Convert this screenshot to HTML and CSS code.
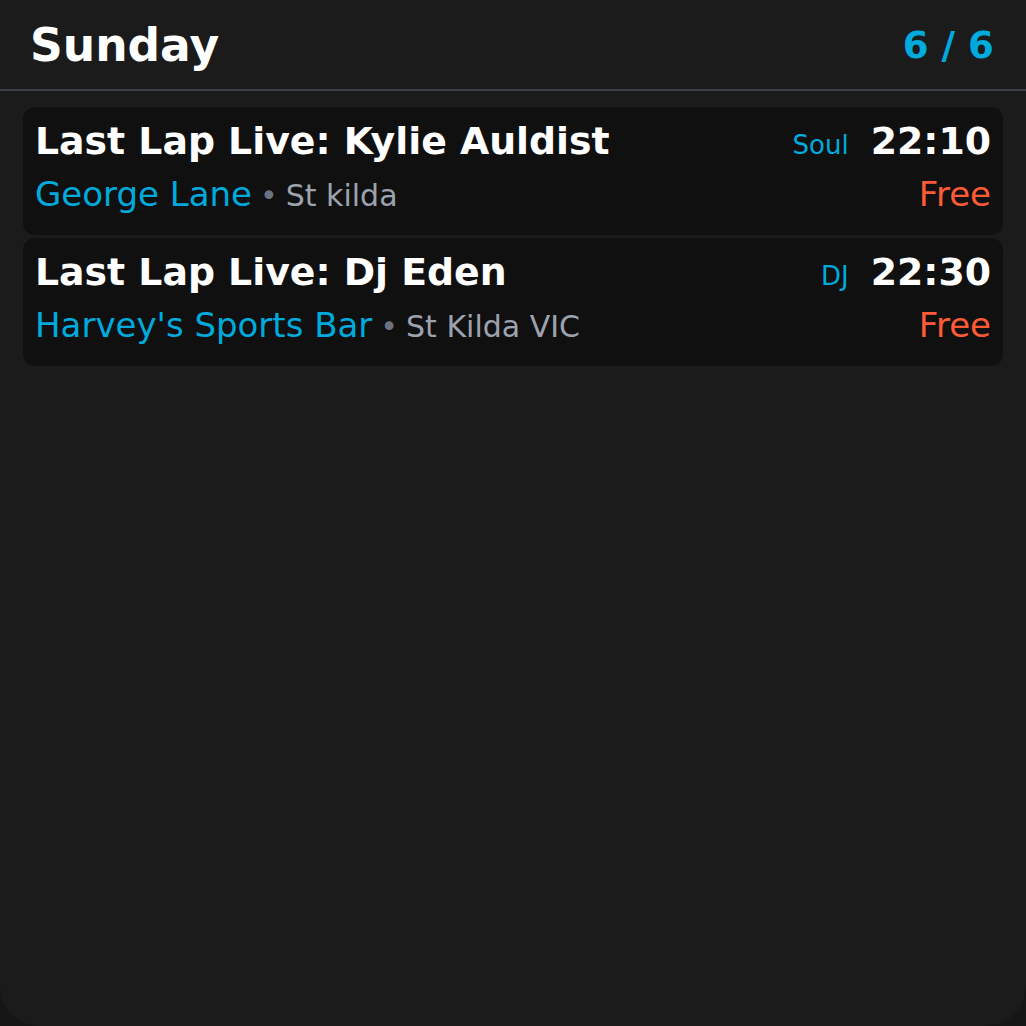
FILE: index.html
```html
<!DOCTYPE html>
<html>
<head>
<meta charset="utf-8">
<link rel="stylesheet" href="styles.css">
</head>
<body>
<div class="panel">
  <header class="head">
    <h1 class="day">Sunday</h1>
    <div class="count">6 / 6</div>
  </header>
  <div class="list">
    <div class="card">
      <div class="row">
        <div class="title">Last Lap Live: Kylie Auldist</div>
        <div class="right">
          <span class="tag">Soul</span>
          <span class="time">22:10</span>
        </div>
      </div>
      <div class="row row2">
        <div class="place"><span class="venue">George Lane</span><span class="dot">•</span><span class="loc">St kilda</span></div>
        <div class="price">Free</div>
      </div>
    </div>
    <div class="card">
      <div class="row">
        <div class="title">Last Lap Live: Dj Eden</div>
        <div class="right">
          <span class="tag">DJ</span>
          <span class="time">22:30</span>
        </div>
      </div>
      <div class="row row2">
        <div class="place"><span class="venue">Harvey's Sports Bar</span><span class="dot">•</span><span class="loc">St Kilda VIC</span></div>
        <div class="price">Free</div>
      </div>
    </div>
  </div>
</div>
</body>
</html>
```

FILE: styles.css
```css
html, body {
  margin: 0;
  padding: 0;
  background: #161616;
}
body {
  font-family: "DejaVu Sans", sans-serif;
  color: #fff;
}
.panel {
  width: 1026px;
  height: 1026px;
  background: #1b1b1b;
  border-radius: 0 0 40px 40px;
  box-sizing: border-box;
}
.head {
  height: 89px;
  border-bottom: 2px solid #3a3f49;
  display: flex;
  align-items: center;
  justify-content: space-between;
  padding: 0 32px 0 30px;
}
.day {
  margin: 0;
  font-size: 45.5px;
  font-weight: bold;
  line-height: normal;
  padding-top: 2px;
}
.count {
  font-size: 37.2px;
  font-weight: bold;
  color: #00aadd;
}
.list {
  padding: 16px 23px 0;
  display: flex;
  flex-direction: column;
  gap: 3px;
}
.card {
  background: #101010;
  border-radius: 12px;
  padding: 12px 12px 21px;
  display: flex;
  flex-direction: column;
  gap: 11px;
}
.row {
  display: flex;
  justify-content: space-between;
  align-items: baseline;
}
.title {
  font-size: 37.8px;
  font-weight: bold;
  line-height: 44px;
}
.right {
  display: flex;
  align-items: baseline;
  gap: 22px;
}
.tag {
  font-size: 26px;
  color: #00aadd;
}
.time {
  font-size: 37.8px;
  font-weight: bold;
}
.place {
  font-size: 34px;
}
.venue {
  color: #00aadd;
}
.dot {
  font-size: 30px;
  color: #6b7280;
  margin: 0 8px 0 8px;
}
.loc {
  font-size: 30px;
  color: #9ca3af;
}
.price {
  font-size: 34px;
  color: #ff5a36;
}
```
